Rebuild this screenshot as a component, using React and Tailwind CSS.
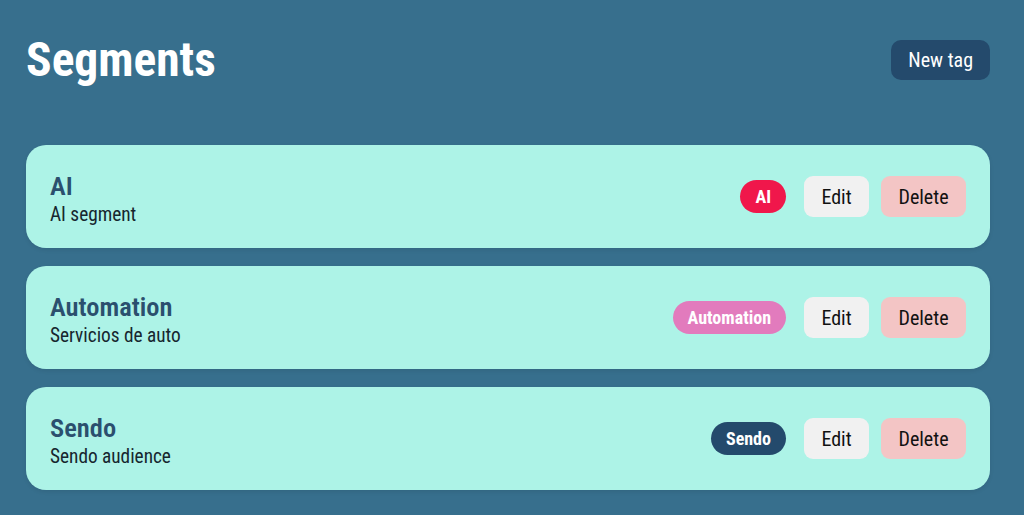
import React from "react";

const segments = [
  { name: "AI", desc: "AI segment", tag: "AI", tagClass: "bg-[#f0174b]" },
  { name: "Automation", desc: "Servicios de auto", tag: "Automation", tagClass: "bg-[#e27bbd]" },
  { name: "Sendo", desc: "Sendo audience", tag: "Sendo", tagClass: "bg-[#244a6c]" },
];

export default function App() {
  return (
    <div
      className="min-h-[515px] w-full bg-[#376f8d] pl-[26px] pr-[34px] font-stretch-condensed"
      style={{ fontFamily: '"Roboto Condensed", Roboto, "Liberation Sans", sans-serif' }}
    >
      <header className="flex items-center justify-between pt-8 h-[88px]">
        <h1 className="text-[47.5px] leading-[56px] font-bold text-white">Segments</h1>
        <button className="h-10 px-[17px] rounded-[10px] bg-[#244a6c] text-white text-[20px]">New tag</button>
      </header>
      <div className="mt-[57px] flex flex-col gap-[18px]">
        {segments.map((s) => (
          <div
            key={s.name}
            className="flex h-[103px] items-center justify-between rounded-[20px] bg-[#adf3e7] px-6 shadow-[0_2px_4px_rgba(0,0,0,0.08)]"
          >
            <div className="flex flex-col pt-1">
              <div className="text-[26.5px] leading-[32px] font-semibold text-[#2b4f6e]">{s.name}</div>
              <div className="text-[19.3px] leading-[26px] text-[#16262e]">{s.desc}</div>
            </div>
            <div className="flex items-center">
              <span className={`h-[33px] px-[15px] rounded-full ${s.tagClass} text-white font-bold text-[18px] flex items-center`}>
                {s.tag}
              </span>
              <button className="ml-[18px] h-[41px] w-[65px] rounded-[9px] bg-[#f1f1f1] text-[20px] text-[#111]">Edit</button>
              <button className="ml-3 h-[41px] w-[85px] rounded-[9px] bg-[#f3c5c5] text-[20px] text-[#111]">Delete</button>
            </div>
          </div>
        ))}
      </div>
    </div>
  );
}
